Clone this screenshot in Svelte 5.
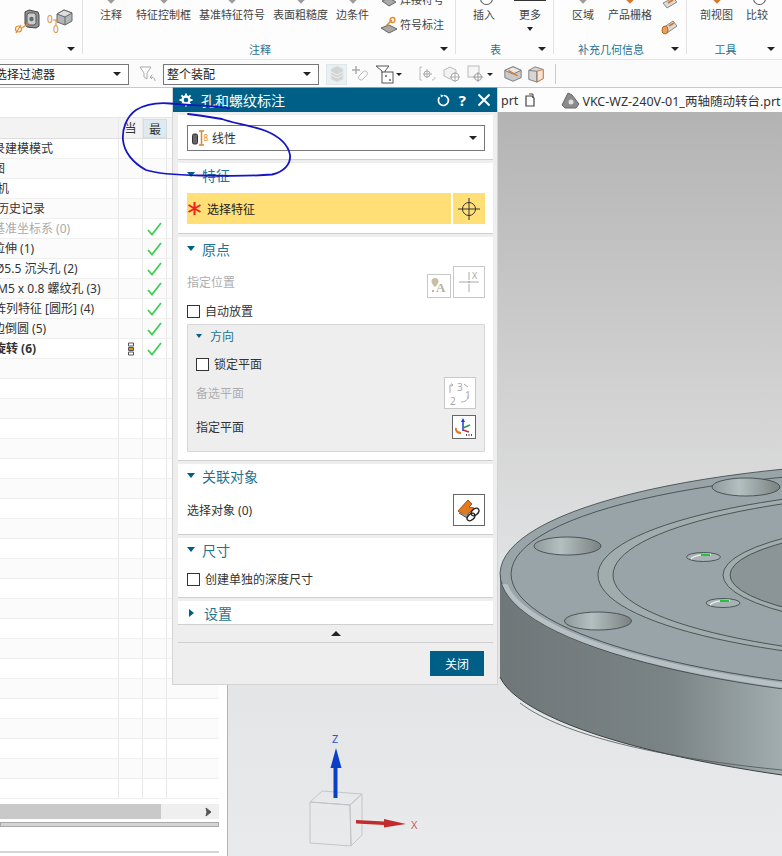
<script>
  const rows = [
    { name: '历史记录建模模式', x: -43 },
    { name: '模型视图', x: -43 },
    { name: '摄像机', x: -27 },
    { name: '历史记录', x: -3 },
    { name: '基准坐标系 (0)', x: -7, muted: true, ok: true },
    { name: '拉伸 (1)', x: -7, ok: true },
    { name: 'Ø5.5 沉头孔 (2)', x: -5, ok: true },
    { name: 'M5 x 0.8 螺纹孔 (3)', x: -3, ok: true },
    { name: '阵列特征 [圆形] (4)', x: -6, ok: true },
    { name: '边倒圆 (5)', x: -7, ok: true },
    { name: '旋转 (6)', x: -6, ok: true, bold: true, tree: true }
  ];
  const blanks = Array.from({ length: 22 });
</script>

<div class="app">
  <header class="ribbon">
    <section class="group g1">
      <div class="tools">
        <svg width="26" height="25" viewBox="0 0 26 25">
          <path d="M10 3l4-2 9 2 1 3v11l-3 2-9-1-2-3z" fill="#8f9496" stroke="#444"/>
          <rect x="12" y="4" width="9" height="12" rx="2.500" fill="#c9cdcf" stroke="#555"/>
          <circle cx="16.500" cy="10" r="2.200" fill="#666"/>
          <circle cx="3.500" cy="20" r="3" fill="none" stroke="#e08a2e" stroke-width="1.200"/>
          <path d="M1 24l5-8M7 19l7-5" stroke="#e08a2e" stroke-width="1.200" fill="none"/>
        </svg>
        <svg width="26" height="25" viewBox="0 0 26 25">
          <path d="M10 5l7-4 8 3v8l-7 4-8-3z" fill="#b3b6b8" stroke="#666"/>
          <path d="M10 5l8 3 7-4-8-3z" fill="#dcdedf" stroke="#666"/>
          <path d="M18 8v8" stroke="#666"/>
          <text x="0" y="14" class="dim">0</text>
          <path d="M6 11h5M9 11v5" stroke="#e08a2e" fill="none"/>
          <text x="6" y="24" class="dim">0</text>
        </svg>
      </div>
      <i class="caret corner"></i>
    </section>

    <section class="group g2">
      <div class="tools">
        <div class="tool first"><b class="stub"></b>注释</div>
        <div class="tool"><b class="stub"></b>特征控制框</div>
        <div class="tool"><b class="stub"></b>基准特征符号</div>
        <div class="tool"><b class="stub"></b>表面粗糙度</div>
        <div class="tool"><b class="stub"></b>边条件</div>
        <div class="side">
          <div class="side-row clipped">
            <svg width="18" height="16" viewBox="0 0 18 16"><path d="M2 9l7-3 7 4-7 4z" fill="#a9a9a9" stroke="#666"/><path d="M7 8l6-7" stroke="#e08a2e" stroke-width="2"/></svg>
            焊接符号
          </div>
          <div class="side-row">
            <svg width="18" height="18" viewBox="0 0 18 18"><path d="M1 12l8-3 8 4-8 4z" fill="#a9a9a9" stroke="#666"/><path d="M6 10l6-6" stroke="#e08a2e" stroke-width="1.600"/><circle cx="12.500" cy="4" r="2.500" fill="none" stroke="#e08a2e" stroke-width="1.300"/></svg>
            符号标注
          </div>
        </div>
      </div>
      <h4>注释</h4>
      <i class="caret corner"></i>
    </section>

    <section class="group g3">
      <div class="tools">
        <div class="tool"><b class="stub round"></b>插入</div>
        <div class="tool more"><b class="stub line"></b>更多<i class="caret"></i></div>
      </div>
      <h4>表</h4>
      <i class="caret corner"></i>
    </section>

    <section class="group g4">
      <div class="tools">
        <div class="tool"><b class="stub"></b>区域</div>
        <div class="tool"><b class="stub orange"></b>产品栅格</div>
        <div class="cyls">
          <svg width="18" height="12" viewBox="0 0 18 12"><path d="M2 6l10-5 4 4-10 6z" fill="#dedad5" stroke="#888"/><path d="M7 6l5-3" stroke="#d9772a" stroke-width="2"/></svg>
          <svg width="18" height="18" viewBox="0 0 18 18"><path d="M2 10l10-7 4 5-10 7z" fill="#dedad5" stroke="#888"/><ellipse cx="4" cy="12" rx="3" ry="4" fill="#e8a05a" stroke="#b5651d"/><path d="M8 8l5-3" stroke="#d9772a" stroke-width="2"/></svg>
        </div>
      </div>
      <h4>补充几何信息</h4>
      <i class="caret corner"></i>
    </section>

    <section class="group g5">
      <div class="tools">
        <div class="tool"><b class="stub orange"></b>剖视图</div>
        <div class="tool"><b class="stub round"></b>比较</div>
      </div>
      <h4>工具</h4>
      <i class="caret corner"></i>
    </section>
  </header>

  <div class="filterbar">
    <div class="combo c1"><span>选择过滤器</span><i class="caret"></i></div>
    <svg class="gi" width="20" height="20" viewBox="0 0 20 20"><path d="M2 3h11l-4 6v6l-3-2V9z" fill="#fff" stroke="#aaa"/><path d="M17 17c0-3-2-4-5-4l2-2M12 13l2 2" fill="none" stroke="#aaa"/></svg>
    <div class="combo c2"><span>整个装配</span><i class="caret"></i></div>
    <div class="pressed">
      <svg width="14" height="18" viewBox="0 0 14 18"><path d="M1 4l6-3 6 3v10l-6 3-6-3z" fill="#d3d5d5" stroke="#e2e2e2"/><path d="M1 7l6 3 6-3M1 10l6 3 6-3" fill="none" stroke="#eee"/></svg>
    </div>
    <svg class="gi" width="20" height="20" viewBox="0 0 20 20"><path d="M5 2v8M1 6h8" stroke="#aaa" stroke-width="1.500"/><path d="M8 12l4-4a2.500 2.500 0 0 1 4 3l-4 4a2.500 2.500 0 0 1-4-3z" fill="none" stroke="#bbb"/></svg>
    <svg class="gi dark" width="20" height="20" viewBox="0 0 20 20"><path d="M1 2h13l-4 5v2l-3 0V7z" fill="#fff" stroke="#555"/><rect x="7" y="8" width="11" height="11" fill="#fff" stroke="#555"/><path d="M10 11h2v2h-2zM14 15h2v2h-2z" fill="#888"/></svg>
    <i class="caret small"></i>
    <svg class="gi i4" width="20" height="20" viewBox="0 0 20 20"><path d="M4 3H2v13h2" fill="none" stroke="#bbb"/><path d="M9 5v9M5 10h9" stroke="#aaa"/><circle cx="9" cy="10" r="3" fill="none" stroke="#aaa"/><path d="M14 16c2 0 3-1 3-3" fill="none" stroke="#bbb"/></svg>
    <svg class="gi" width="20" height="20" viewBox="0 0 20 20"><path d="M2 6l6-3 6 3v6l-6 3-6-3z" fill="#f2f2f2" stroke="#bbb"/><circle cx="13" cy="13" r="4" fill="#fff" stroke="#aaa"/><path d="M13 8v10M8 13h10" stroke="#aaa"/></svg>
    <svg class="gi" width="20" height="20" viewBox="0 0 20 20"><rect x="2" y="2" width="11" height="11" fill="#f6f6f6" stroke="#bbb"/><circle cx="12" cy="13" r="3.500" fill="#fff" stroke="#999"/><path d="M12 8v10M7 13h10" stroke="#999"/></svg>
    <i class="caret small"></i>
    <svg class="gi" width="20" height="20" viewBox="0 0 22 20"><path d="M2 6l9-4 9 4v8l-9 4-9-4z" fill="#c9c9c9" stroke="#777"/><path d="M2 6l9 4 9-4-9-4z" fill="#e9e9e9" stroke="#777"/><path d="M6 6l10 6" stroke="#d9772a" stroke-width="1.500"/></svg>
    <svg class="gi" width="18" height="20" viewBox="0 0 20 20"><path d="M2 6l7-4 9 3v10l-7 4-9-3z" fill="#d6d6d6" stroke="#777"/><path d="M11 7l7-2v10l-7 4z" fill="#f1e4d8" stroke="#d9772a"/><path d="M2 6l9 1v12" fill="none" stroke="#777"/></svg>
    <span class="sep"></span>
  </div>

  <main class="main">
    <aside class="nav">
      <div class="nav-panel">
        <div class="nav-head">
          <span class="cell-name"></span>
          <span class="cell">当</span>
          <span class="cell latest">最</span>
          <span class="cell-rest"></span>
        </div>
        <div class="nav-rows">
          {#each rows as row}
            <div class="row">
              <span class="cell-name">
                <span class="name" class:muted={row.muted} class:bold={row.bold} style="margin-left:{row.x}px">{row.name}</span>
              </span>
              <span class="cell">
                {#if row.tree}
                  <svg width="8" height="14" viewBox="0 0 8 14"><path d="M1.500 1h5v3h-5zM1.500 5.500h5v3h-5zM1.500 10h5v3h-5z" fill="#fff" stroke="#555"/><path d="M2 6h4v2H2z" fill="#e08a2e"/></svg>
                {/if}
              </span>
              <span class="cell">
                {#if row.ok}
                  <svg width="15" height="14" viewBox="0 0 15 14"><path d="M1 8l4 4.500L14 1" fill="none" stroke="#3fcf55" stroke-width="1.800"/></svg>
                {/if}
              </span>
              <span class="cell-rest"></span>
            </div>
          {/each}
          {#each blanks as _}
            <div class="row">
              <span class="cell-name"></span>
              <span class="cell"></span>
              <span class="cell"></span>
              <span class="cell-rest"></span>
            </div>
          {/each}
        </div>
        <div class="scrollbar">
          <span class="thumb"></span>
          <svg width="8" height="10" viewBox="0 0 8 10"><path d="M1 1l5 4-5 4 1-4z" fill="#555" stroke="#555"/></svg>
        </div>
        <div class="nav-foot"></div>
      </div>
      <div class="nav-line"></div>
    </aside>

    <div class="work">
      <div class="tabs">
        <span class="tab-old">prt</span>
        <svg width="12" height="14" viewBox="0 0 12 14"><path d="M2 3h6l2 2v8H2z" fill="none" stroke="#444" stroke-width="1.200"/><path d="M5 1h4v4" fill="none" stroke="#444"/></svg>
        <svg class="tab-ic" width="19" height="18" viewBox="0 0 19 18"><path d="M1 14l6-12 4 2 7 9-3 4H4z" fill="#8b8b8b" stroke="#666"/><circle cx="10" cy="11" r="2.500" fill="#ddd"/></svg>
        <span class="tab-name">VKC-WZ-240V-01_两轴随动转台.prt</span>
      </div>
      <div class="canvas">
        <svg class="model" width="554" height="744" viewBox="228 112 554 744">
          <defs>
            <linearGradient id="side" x1="500" x2="782" y1="0" y2="0" gradientUnits="userSpaceOnUse">
              <stop offset="0" stop-color="#6f7779"/>
              <stop offset="0.6" stop-color="#7a8385"/>
              <stop offset="1" stop-color="#a2adb0"/>
            </linearGradient>
            <linearGradient id="hole" x1="0" x2="1" y1="0" y2="0">
              <stop offset="0" stop-color="#8f9a9c"/>
              <stop offset="0.4" stop-color="#b4bfc2"/>
              <stop offset="1" stop-color="#79827f"/>
            </linearGradient>
            <clipPath id="lower">
              <path d="M495 584L782 590V800H495z"/>
            </clipPath>
          </defs>

          <path d="M500 573V677C516 712 610 750 782 775V600z" fill="url(#side)"/>
          <path d="M500 677C516 712 610 750 782 775" fill="none" stroke="#39403f" stroke-width="1"/>
          <path d="M520 703C555 730 640 756 782 770" fill="none" stroke="#4c5554" stroke-width="0.800"/>

          <ellipse cx="1000" cy="583" rx="500" ry="122" transform="rotate(1.100 1000 583)" fill="#98a4a8" stroke="#3a4242" stroke-width="0.800"/>
          <g clip-path="url(#lower)">
            <ellipse cx="1000" cy="583" rx="497" ry="118" transform="rotate(1.100 1000 583)" fill="none" stroke="#bcc7ca" stroke-width="5" opacity="0.850"/>
          </g>
          <ellipse cx="1005" cy="583" rx="494" ry="114" transform="rotate(1.100 1000 583)" fill="none" stroke="#3a4242" stroke-width="0.800"/>

          <ellipse cx="1000" cy="575" rx="402" ry="90" fill="#a1acaf" stroke="#39403f" stroke-width="0.800"/>
          <ellipse cx="1000" cy="575" rx="387" ry="86" fill="#98a4a8" stroke="#39403f" stroke-width="0.800"/>
          <ellipse cx="1000" cy="575" rx="277" ry="59" fill="#a1acaf" stroke="#39403f" stroke-width="0.800"/>
          <ellipse cx="1000" cy="575" rx="270" ry="54" fill="#8b9597" stroke="#39403f" stroke-width="0.800"/>

          <ellipse cx="567.500" cy="546" rx="33.500" ry="9" fill="url(#hole)" stroke="#39403f" stroke-width="0.800"/>
          <ellipse cx="598" cy="621" rx="33.500" ry="9" fill="url(#hole)" stroke="#39403f" stroke-width="0.800"/>
          <ellipse cx="746" cy="487" rx="34" ry="9" fill="url(#hole)" stroke="#39403f" stroke-width="0.800"/>
          <ellipse cx="703.500" cy="557" rx="17" ry="4.500" fill="#a9b3b6" stroke="#39403f" stroke-width="0.800"/>
          <ellipse cx="723" cy="603" rx="17" ry="4.500" fill="#a9b3b6" stroke="#39403f" stroke-width="0.800"/>
          <path d="M691 559c3-4 14-5 20-4.500M710 605c3-4 14-5 20-4.500" fill="none" stroke="#e9f0f0" stroke-width="1.300"/>
          <path d="M701 555h9M720 601h9" fill="none" stroke="#22c43a" stroke-width="2"/>

          <path d="M310 802l12-11 40 3-12 11zM350 805l12-11v41l-11 11zM310 802l40 3 1 41-41-3z" fill="none" stroke="#bfc2c4" stroke-width="0.900"/>
          <path d="M335.500 798V766" stroke="#0c3fc7" stroke-width="4"/>
          <path d="M336 748l5.500 20h-11z" fill="#0c3fc7"/>
          <path d="M356 820l28 1.500V819l22 5-22 3.500V825l-28-1.500z" fill="#c22c2c"/>
          <text x="332" y="743" class="axis z">Z</text>
          <text x="411" y="829" class="axis x">X</text>
        </svg>
      </div>
    </div>
  </main>

  <div class="dialog">
    <div class="titlebar">
      <svg width="14" height="14" viewBox="0 0 14 14"><circle cx="7" cy="7" r="3.500" fill="none" stroke="#fff" stroke-width="2.400"/><path d="M7 .5v2.500M7 11v2.500M.5 7H3M11 7h2.500M2.400 2.400l1.800 1.800M9.800 9.800l1.800 1.800M11.600 2.400L9.800 4.200M4.200 9.800l-1.800 1.800" stroke="#fff" stroke-width="1.800"/></svg>
      <span class="title">孔和螺纹标注</span>
      <svg class="reset" width="14" height="14" viewBox="0 0 14 14"><path d="M8 2.500a5 5 0 1 1-4.500 1.800" fill="none" stroke="#fff" stroke-width="1.700"/><path d="M4.500 1.500l3.500 1-3 2z" fill="#fff"/></svg>
      <span class="help">?</span>
      <svg class="close" width="14" height="14" viewBox="0 0 14 14"><path d="M1.500 1.500l11 11M12.500 1.500l-11 11" stroke="#fff" stroke-width="2"/></svg>
    </div>

    <div class="block type-block">
      <div class="select">
        <svg width="17" height="16" viewBox="0 0 17 16"><rect x="0.500" y="4" width="5" height="10" rx="1.500" fill="#666" stroke="#333"/><path d="M7 1h5M7 15h5M9.500 1v14" stroke="#d9862b" stroke-width="1.500" fill="none"/><text x="11.500" y="11" class="dim small">8</text></svg>
        <span>线性</span>
        <i class="caret"></i>
      </div>
    </div>

    <div class="block feature-block">
      <div class="head"><i class="tri"></i>特征</div>
      <div class="picker">
        <div class="pick-main">
          <svg width="15" height="15" viewBox="0 0 15 15"><path d="M7.500 1v13M1.500 4l12 7M13.500 4l-12 7" stroke="#f0231f" stroke-width="2"/></svg>
          选择特征
        </div>
        <div class="pick-aim">
          <svg width="22" height="22" viewBox="0 0 22 22"><circle cx="11" cy="11" r="6.500" fill="none" stroke="#333"/><path d="M11 0v22M0 11h22" stroke="#333"/></svg>
        </div>
      </div>
    </div>

    <div class="block origin-block">
      <div class="head"><i class="tri"></i>原点</div>
      <div class="line loc">
        <span class="off">指定位置</span>
        <div class="loc-icons">
          <span class="btn small-btn disabled">
            <svg width="20" height="20" viewBox="0 0 20 20"><path d="M6 2a3.500 3.500 0 0 1 3.500 3.500C9.500 8 6 11 6 11S2.500 8 2.500 5.500A3.500 3.500 0 0 1 6 2z" fill="#c9bfa6"/><text x="7" y="16" class="a-glyph">A</text><circle cx="4" cy="15" r="1" fill="#d08a8a"/></svg>
          </span>
          <span class="btn big-btn disabled">
            <svg width="26" height="26" viewBox="0 0 26 26"><path d="M3 13h9M14 13h9M13 3v8M13 15v8" stroke="#aaa"/><circle cx="13" cy="13" r="1" fill="#999"/><text x="16" y="10" class="x-glyph">X</text></svg>
          </span>
        </div>
      </div>
      <label class="check auto"><span class="box"></span>自动放置</label>
      <div class="subgroup">
        <div class="subhead"><i class="tri small"></i>方向</div>
        <label class="check lock"><span class="box"></span>锁定平面</label>
        <div class="line alt">
          <span class="off">备选平面</span>
          <span class="btn big-btn disabled">
            <svg width="28" height="28" viewBox="0 0 28 28"><text x="11" y="12" class="num">3</text><text x="19" y="20" class="num">1</text><text x="4" y="26" class="num">2</text><path d="M4 14V6h3l-1.500-1.500M7 6L5.500 7.500M18 5l4 3M22 17c0 4-3 6-7 6" fill="none" stroke="#aaa"/></svg>
          </span>
        </div>
        <div class="line plane">
          <span>指定平面</span>
          <span class="btn mid-btn">
            <svg width="20" height="20" viewBox="0 0 20 20"><path d="M9 14V3" stroke="#1a3fc4" stroke-width="1.500"/><path d="M9 1l2 4H7z" fill="#1a3fc4"/><path d="M9 11l7-3" stroke="#2a9d3f" stroke-width="1.500"/><path d="M9 13l6 2" stroke="#c22c2c" stroke-width="1.500"/><path d="M2 11c-1 3 2 5 5 5" fill="none" stroke="#e0761f" stroke-width="2"/><path d="M12 18h1M14.500 18h1M17 18h1" stroke="#222" stroke-width="1.600"/></svg>
          </span>
        </div>
      </div>
    </div>

    <div class="block relate-block">
      <div class="head"><i class="tri"></i>关联对象</div>
      <div class="line rel">
        <span>选择对象 (0)</span>
        <span class="btn big-btn">
          <svg width="26" height="26" viewBox="0 0 26 26"><path d="M2 14L12 3l4 4-3 3 5 1-8 8z" fill="#e0791f" stroke="#a9520f"/><path d="M3 16l8 5 2-3" fill="#999" stroke="#555"/><g fill="none" stroke="#222" stroke-width="1.500"><ellipse cx="19" cy="15" rx="4.500" ry="3" transform="rotate(-40 19 15)"/><ellipse cx="15" cy="20" rx="4.500" ry="3" transform="rotate(-40 15 20)"/></g></svg>
        </span>
      </div>
    </div>

    <div class="block size-block">
      <div class="head"><i class="tri"></i>尺寸</div>
      <label class="check depth"><span class="box"></span>创建单独的深度尺寸</label>
    </div>

    <div class="block set-block">
      <div class="head"><i class="tri right"></i>设置</div>
    </div>

    <div class="expander"><i class="up"></i></div>
    <div class="footer"><button class="closebtn">关闭</button></div>
  </div>

  <svg class="ink" width="782" height="200" viewBox="0 0 782 200">
    <path d="M229 108C212 106 190 105 170 103.500C158 102.500 146 104 136 110C126 117 122 130 123 140C124 152 133 163 146 170C158 174 178 175 200 175.500C222 176 250 176.500 272 174.500C284 172 291 164 290 155C288 144 278 136 266 131C250 125 232 123 222 119C210 117 198 115 188 114" fill="none" stroke="#1515c4" stroke-width="1.800" stroke-linecap="round"/>
  </svg>
</div>

<style>
  :global(body) {
    margin: 0;
    background: #fff;
  }

  .app {
    position: relative;
    width: 782px;
    height: 856px;
    overflow: hidden;
    display: flex;
    flex-direction: column;
    font-family: "Noto Sans", "Noto Sans CJK SC", sans-serif;
    font-size: 12px;
    color: #333;
  }

  .caret {
    display: inline-block;
    width: 0;
    height: 0;
    border-left: 4px solid transparent;
    border-right: 4px solid transparent;
    border-top: 4px solid #222;
  }

  .caret.small {
    border-left-width: 3px;
    border-right-width: 3px;
    border-top-width: 3px;
    margin: 0 6px 0 1px;
  }

  /* ribbon */
  .ribbon {
    height: 59px;
    flex: none;
    display: flex;
    background: #fdfdfd;
    border-bottom: 1px solid #e4e4e4;
    overflow: hidden;
  }

  .group {
    position: relative;
    height: 54px;
    border-right: 1px solid #e2e2e2;
    box-sizing: border-box;
  }

  .group h4 {
    position: absolute;
    left: 0;
    right: 18px;
    top: 41px;
    margin: 0;
    font-size: 11px;
    font-weight: 400;
    line-height: 18px;
    text-align: center;
    color: #1e7391;
  }

  .corner {
    position: absolute;
    right: 7px;
    top: 47px;
  }

  .tools {
    display: flex;
    align-items: flex-start;
  }

  .tool {
    display: flex;
    flex-direction: column;
    align-items: center;
    position: relative;
    font-size: 11px;
    line-height: 16px;
    padding-top: 7px;
    white-space: nowrap;
    color: #444;
  }

  .stub {
    position: absolute;
    top: -6px;
    left: 50%;
    width: 8px;
    height: 8px;
    margin-left: -4px;
    background: #9b9b9b;
    transform: rotate(45deg);
  }

  .stub.round {
    top: -8px;
    width: 11px;
    height: 11px;
    border-radius: 50%;
    background: #fff;
    border: 1px solid #555;
  }

  .stub.line {
    top: 0;
    left: 0;
    width: 100%;
    height: 1px;
    margin: 0;
    background: #333;
    transform: none;
  }

  .stub.orange {
    background: #d9772a;
  }

  .g1 {
    width: 83px;
  }

  .g1 .tools {
    padding: 9px 0 0 15px;
    gap: 6px;
  }

  .dim {
    font-size: 10px;
    fill: #e08a2e;
  }

  .dim.small {
    font-size: 8px;
  }

  .g2 {
    width: 373px;
  }

  .g2 .tools {
    padding-left: 17px;
    gap: 8px;
  }

  .g2 .first {
    margin-right: 6px;
  }

  .side {
    margin-left: 3px;
    display: flex;
    flex-direction: column;
    margin-top: -10px;
    gap: 6px;
  }

  .side-row {
    display: flex;
    align-items: center;
    gap: 2px;
    font-size: 11px;
    line-height: 16px;
    height: 19px;
    white-space: nowrap;
    color: #444;
  }

  .g3 {
    width: 98px;
  }

  .g3 .tools {
    padding-left: 17px;
    gap: 24px;
  }

  .more .caret {
    margin-top: 4px;
    border-left-width: 3px;
    border-right-width: 3px;
  }

  .more .stub.line {
    left: -5px;
    width: 32px;
  }

  .g4 {
    width: 133px;
  }

  .g4 .tools {
    padding-left: 18px;
    gap: 14px;
  }

  .cyls {
    margin-left: -5px;
    display: flex;
    flex-direction: column;
    gap: 9px;
    margin-top: -3px;
  }

  .g5 {
    flex: 1;
    border-right: 0;
  }

  .g5 .tools {
    padding-left: 13px;
    gap: 13px;
  }

  /* selection bar */
  .filterbar {
    height: 28px;
    flex: none;
    box-sizing: border-box;
    display: flex;
    align-items: center;
    background: #fbfbfb;
    border-bottom: 1px solid #c9c9c9;
    padding-top: 1px;
  }

  .combo {
    height: 21px;
    box-sizing: border-box;
    border: 1px solid #777;
    background: #fff;
    display: flex;
    align-items: center;
    justify-content: space-between;
    padding: 0 7px 0 3px;
    overflow: hidden;
    white-space: nowrap;
    color: #222;
  }

  .c1 {
    width: 130px;
    margin-left: -1px;
  }

  .c1 span {
    margin-left: -8px;
  }

  .c2 {
    width: 156px;
    margin-left: 5px;
  }

  .gi {
    flex: none;
    margin-left: 4px;
  }

  .filterbar > svg:first-of-type {
    margin-left: 9px;
  }

  .i4 {
    margin-left: 10px;
  }

  .pressed {
    width: 21px;
    height: 21px;
    margin-left: 7px;
    background: #eaf1f4;
    border: 1px solid #e0e7ea;
    box-sizing: border-box;
    display: flex;
    align-items: center;
    justify-content: center;
  }

  .sep {
    width: 1px;
    height: 20px;
    background: #ccc;
    margin-left: 10px;
  }

  /* layout under the bars */
  .main {
    flex: 1;
    min-height: 0;
    display: flex;
  }

  .nav {
    width: 228px;
    flex: none;
    box-sizing: border-box;
    background: #fff;
    border-right: 1px solid #b4b4b4;
    padding-top: 29px;
    display: flex;
    flex-direction: column;
    overflow: hidden;
  }

  .nav-panel {
    width: 219px;
    display: flex;
    flex-direction: column;
  }

  .nav-head {
    display: flex;
    height: 22px;
    background: #f3f3f3;
    border-top: 1px solid #e6e6e6;
    box-sizing: border-box;
    border-bottom: 1px solid #ddd;
  }

  .row {
    display: flex;
    height: 20px;
    box-sizing: border-box;
    border-bottom: 1px solid #efefef;
  }

  .row:nth-child(even) {
    background: #fbfbfb;
  }

  .cell-name {
    width: 118px;
    flex: none;
    overflow: hidden;
    white-space: nowrap;
    line-height: 19px;
    border-right: 1px solid #e8e8e8;
    box-sizing: content-box;
  }

  .cell {
    width: 23px;
    flex: none;
    border-right: 1px solid #e8e8e8;
    display: flex;
    align-items: center;
    justify-content: center;
  }

  .cell-rest {
    flex: 1;
  }

  .latest {
    background: #dfeaf0;
    border: 1px solid #cfdde5;
    box-sizing: content-box;
    width: 22px;
    margin-top: 1px;
  }

  .name {
    display: inline-block;
  }

  .name.muted {
    color: #aaa;
  }

  .name.bold {
    font-weight: 700;
  }

  .nav-rows {
    height: 663px;
    overflow: hidden;
  }

  .scrollbar {
    margin-top: 2px;
    height: 15px;
    background: #efefef;
    display: flex;
    align-items: center;
    justify-content: space-between;
    padding-right: 6px;
  }

  .thumb {
    width: 161px;
    height: 15px;
    background: #c9c9c9;
  }

  .nav-foot {
    height: 3px;
    margin-top: 3px;
    background: #d4d4d4;
    border: 1px solid #aaa;
  }

  .nav-line {
    width: 219px;
    height: 2px;
    margin-top: 24px;
    background: #d4d4d4;
  }

  .work {
    flex: 1;
    min-width: 0;
    display: flex;
    flex-direction: column;
  }

  .tabs {
    height: 24px;
    flex: none;
    display: flex;
    align-items: center;
    background: #fdfdfd;
    padding-left: 273px;
    white-space: nowrap;
    overflow: hidden;
    font-size: 12.500px;
    color: #333;
  }

  .tabs svg {
    flex: none;
  }

  .tab-old {
    margin-right: 6px;
  }

  .tab-ic {
    margin: 0 2px 0 25px;
  }

  .canvas {
    flex: 1;
    min-height: 0;
    background: linear-gradient(#b3b3b3 0, #d2d2d2 38%, #e0e1e2 60%, #e8eaeb 100%);
  }

  .model {
    display: block;
  }

  .axis {
    font-size: 11px;
  }

  .axis.z {
    fill: #2a55d0;
  }

  .axis.x {
    fill: #d06060;
  }

  /* dialog over the work area */
  .dialog {
    position: absolute;
    left: 172px;
    top: 87px;
    width: 326px;
    height: 598px;
    box-sizing: border-box;
    background: #eeeeee;
    border: 1px solid #d4d4d4;
    border-top-color: #9a9a9a;
    display: flex;
    flex-direction: column;
  }

  .titlebar {
    height: 24px;
    flex: none;
    background: #005f87;
    color: #fff;
    display: flex;
    align-items: center;
    padding: 0 6px;
  }

  .title {
    margin-left: 8px;
    font-size: 14px;
    flex: 1;
  }

  .reset {
    margin-right: 9px;
  }

  .help {
    font-size: 15px;
    font-weight: 700;
    margin-right: 11px;
    line-height: 1;
  }

  .block {
    margin: 3px 4px 0 5px;
    background: #fff;
    border-bottom: 1px solid #cfcfcf;
    box-sizing: border-box;
    flex: none;
    padding: 0 8px 0 9px;
  }

  .head {
    display: flex;
    align-items: center;
    height: 25px;
    box-sizing: border-box;
    padding-bottom: 2px;
    font-size: 14px;
    color: #1e7391;
  }

  .tri {
    width: 0;
    height: 0;
    border-left: 4px solid transparent;
    border-right: 4px solid transparent;
    border-top: 5px solid #005f87;
    margin-right: 7px;
  }

  .tri.small {
    border-left-width: 3.500px;
    border-right-width: 3.500px;
    border-top-width: 4px;
  }

  .tri.right {
    border-top: 4px solid transparent;
    border-bottom: 4px solid transparent;
    border-left: 5px solid #005f87;
    border-right: 0;
    margin: 0 10px 0 2px;
  }

  .type-block {
    height: 45px;
    padding-top: 10px;
  }

  .select {
    height: 26px;
    box-sizing: border-box;
    border: 1px solid #777;
    display: flex;
    align-items: center;
    padding: 0 7px 0 4px;
    gap: 3px;
    color: #333;
  }

  .select span {
    flex: 1;
  }

  .feature-block {
    height: 71px;
  }

  .picker {
    display: flex;
    gap: 2px;
    margin-top: 5px;
  }

  .pick-main {
    flex: 1;
    height: 31px;
    background: #ffdf76;
    display: flex;
    align-items: center;
    gap: 5px;
    color: #222;
  }

  .pick-aim {
    width: 32px;
    height: 31px;
    background: #ffdf76;
    display: flex;
    align-items: center;
    justify-content: center;
  }

  .origin-block {
    height: 224px;
  }

  .line {
    display: flex;
    align-items: center;
    justify-content: space-between;
  }

  .off {
    color: #aeaeae;
  }

  .btn {
    display: flex;
    align-items: center;
    justify-content: center;
    box-sizing: border-box;
    border: 1px solid #666;
    background: #fff;
  }

  .btn.disabled {
    border-color: #c8c8c8;
  }

  .big-btn {
    width: 32px;
    height: 32px;
  }

  .small-btn {
    width: 24px;
    height: 24px;
  }

  .mid-btn {
    width: 24px;
    height: 24px;
  }

  .loc {
    margin-top: 4px;
    height: 32px;
  }

  .loc-icons {
    display: flex;
    align-items: flex-end;
    gap: 2px;
  }

  .a-glyph {
    font-size: 13px;
    font-weight: 700;
    font-family: "Liberation Serif", serif;
    fill: #b5b0a4;
  }

  .x-glyph {
    font-size: 9px;
    fill: #aaa;
  }

  .num {
    font-size: 10px;
    fill: #aaa;
  }

  .check {
    display: flex;
    align-items: center;
    gap: 5px;
    color: #333;
  }

  .box {
    width: 13px;
    height: 13px;
    box-sizing: border-box;
    border: 1px solid #333;
    background: #fff;
    flex: none;
  }

  .auto {
    height: 18px;
    margin-top: 4px;
  }

  .subgroup {
    margin-top: 4px;
    height: 128px;
    box-sizing: border-box;
    background: #eeeeee;
    border: 1px solid #d9d9d9;
    padding: 0 8px;
  }

  .subhead {
    display: flex;
    align-items: center;
    height: 22px;
    font-size: 12px;
    color: #1e7391;
  }

  .subhead .tri {
    margin: 0 8px 0 0;
  }

  .lock {
    margin-top: 8px;
    height: 18px;
  }

  .alt {
    margin-top: 4px;
    height: 32px;
  }

  .plane {
    margin-top: 6px;
    height: 24px;
  }

  .plane span:first-child {
    color: #333;
  }

  .relate-block {
    height: 71px;
  }

  .rel {
    margin-top: 5px;
    height: 32px;
  }

  .size-block {
    height: 60px;
  }

  .depth {
    margin-top: 7px;
    height: 18px;
  }

  .set-block {
    height: 24px;
    overflow: hidden;
  }

  .expander {
    margin: 0 4px 0 5px;
    height: 17px;
    flex: none;
    border-bottom: 1px solid #cfcfcf;
    display: flex;
    align-items: center;
    justify-content: center;
  }

  .up {
    width: 0;
    height: 0;
    border-left: 5px solid transparent;
    border-right: 5px solid transparent;
    border-bottom: 5px solid #222;
  }

  .footer {
    display: flex;
    justify-content: flex-end;
    padding: 8px 13px 0 0;
  }

  .closebtn {
    width: 54px;
    height: 25px;
    border: 0;
    padding: 0;
    background: #005f87;
    color: #fff;
    font: inherit;
  }

  .ink {
    position: absolute;
    left: 0;
    top: 0;
    pointer-events: none;
  }
</style>
